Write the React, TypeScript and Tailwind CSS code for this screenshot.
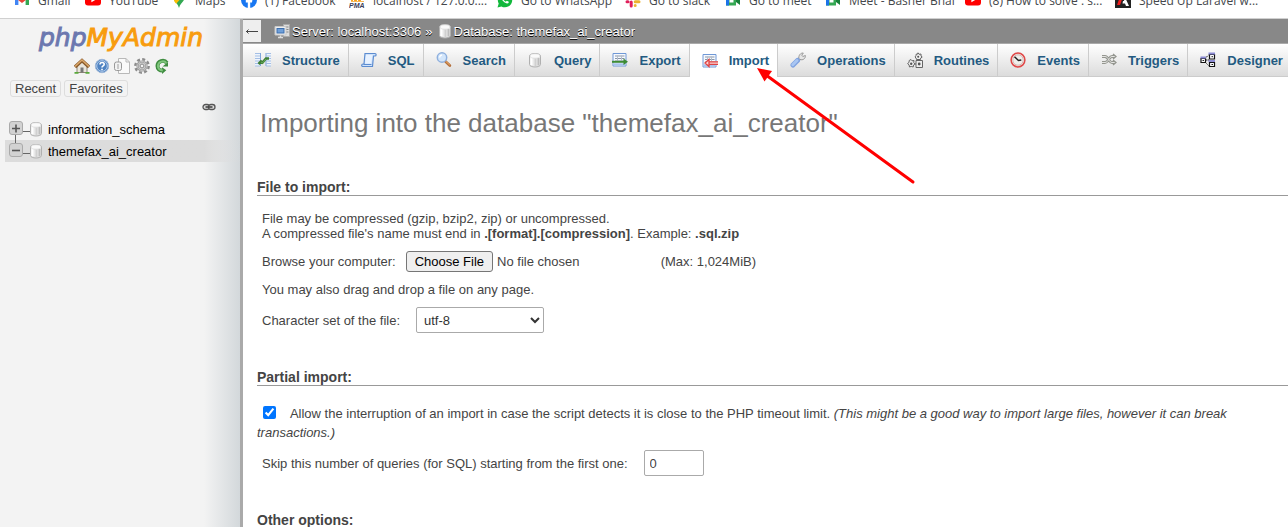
import type { ReactNode } from "react";

function Icon({ children, className = "size-4" }: { children: ReactNode; className?: string }) {
  return (
    <svg viewBox="0 0 16 16" fill="none" aria-hidden="true" className={`shrink-0 ${className}`}>
      {children}
    </svg>
  );
}

/* ---------- bookmark icons ---------- */

const YouTubeMark = () => (
  <Icon>
    <rect x="0" y="2" width="16" height="11.5" rx="3" fill="#f00" />
    <path d="M6.4 5.2v5l4.3-2.5z" fill="#fff" />
  </Icon>
);

const GmailMark = () => (
  <Icon>
    <path d="M1 13V4.5l3.4 2.6V13z" fill="#4285f4" />
    <path d="M11.6 13V7.1L15 4.5V13z" fill="#34a853" />
    <path d="M1 4.2 2.6 3 8 7.4 13.4 3 15 4.2v1.4L8 11 1 5.6z" fill="#ea4335" />
  </Icon>
);

const MapsMark = () => (
  <Icon>
    <path d="M8 0a5.6 5.6 0 0 0-5.6 5.6C2.4 9.500 7 11 8 16c1-5 5.600-6.500 5.600-10.400A5.600 5.600 0 0 0 8 0z" fill="#34a853" />
    <path d="M3 8.400 8.500 4l1.900 1.800-5.200 6C4.300 10.600 3.500 9.800 3 8.400z" fill="#fbbc04" />
    <path d="M8 0a5.600 5.600 0 0 1 5 3l-3 3-4-4.500z" fill="#4285f4" />
    <circle cx="8" cy="5.600" r="2" fill="#fff" />
  </Icon>
);

const FacebookMark = () => (
  <Icon>
    <circle cx="8" cy="8" r="8" fill="#1877f2" />
    <path d="M6.800 16v-5.600H4.800V8h2V6.300c0-2 1.200-3.100 3-3.100l1.700.1v2h-1c-1 0-1.300.6-1.300 1.200V8h2.200l-.4 2.400H9.200V16z" fill="#fff" />
  </Icon>
);

const PmaMark = () => (
  <Icon>
    <path d="M3 9V5h3v4M7 9V4h3v5M11 9V5h4" stroke="#f89c0e" strokeWidth="1.800" />
    <path d="M2 9.500h13" stroke="#f5b95b" />
    <text x="0" y="15.500" fontSize="7" fontWeight="bold" fontStyle="italic" fontFamily="Liberation Sans, sans-serif" fill="#3c3d58">
      PMA
    </text>
  </Icon>
);

const WhatsAppMark = () => (
  <Icon>
    <path d="M.5 15.500 1.700 11.600A7.200 7.200 0 1 1 4.500 14.400z" fill="#12b83c" />
    <path d="M5 4.300c-1 1-.6 3 1.300 5s4 2.700 5.200 1.700l.3-1.200-2-1-1 1c-1-.4-2-1.400-2.500-2.400l.8-1-.8-2z" fill="#fff" />
  </Icon>
);

const SlackMark = () => (
  <Icon>
    <g strokeWidth="3" strokeLinecap="round">
      <path d="M6 2.500v4M2 6.500h0" stroke="#36c5f0" />
      <path d="M10 2.500v4M14 6.500h0" stroke="#2eb67d" />
      <path d="M2 9.800h1M6.200 10v4" stroke="#e01e5a" />
      <path d="M10.200 9.800H14M10.200 13.500h0" stroke="#ecb22e" />
    </g>
  </Icon>
);

const MeetMark = () => (
  <Icon>
    <path d="M1 3h10v10.500H1z" fill="#34a853" />
    <path d="M1 3h3v10.500H1z" fill="#1a73e8" />
    <path d="M11 7 15 3.500v9.500l-4-3z" fill="#188038" />
    <path d="M4.500 6h4v4.500h-4z" fill="#fff" />
  </Icon>
);

const LaravelMark = () => (
  <Icon>
    <path d="M0 0h16v16H0z" fill="#222" />
    <path d="M6 2h3L5 13H2z" fill="#f01c1c" />
    <path d="M9 3l5 11h-3l-1-2.500H7.500L8 9h1.300L8 6z" fill="#fff" />
  </Icon>
);

/* ---------- phpMyAdmin icons ---------- */

const HomeIcon = () => (
  <Icon>
    <path d="M3 8v6.500h10V8L8 3.500z" fill="#e9e5dc" stroke="#8d8577" />
    <path d="M6.500 14.500V9.500h3v5z" fill="#777" />
    <path d="M1 9 8 2.500 15 9" stroke="#8a5a2b" strokeWidth="3.400" />
    <path d="M1 8.500 8 2l7 6.500" stroke="#dca96b" strokeWidth="1.500" />
    <path d="M.5 14.800h4M11.500 14.800h4" stroke="#58a83a" strokeWidth="1.800" />
  </Icon>
);

const HelpIcon = () => (
  <Icon>
    <circle cx="8" cy="8" r="6.700" fill="#4f83c2" stroke="#9db7d8" />
    <circle cx="8" cy="8" r="5.300" stroke="#b4cdeb" />
    <path d="M6 6.500c0-2.800 4.200-2.500 4.200-.2C10.200 8 8 7.700 8 9.500M8 10.800v1.500" stroke="#fff" strokeWidth="1.600" />
  </Icon>
);

const DocsIcon = () => (
  <Icon>
    <path d="M4.500.5H12L15.500 4v11.500h-11z" fill="#fafafa" stroke="#b9b9b9" />
    <path d="M12 .5V4h3.500" stroke="#b9b9b9" />
    <rect x=".5" y="4" width="7" height="8.500" rx="2" fill="#f2f2f2" stroke="#999" />
    <path d="M4 6v5" stroke="#bbb" strokeWidth="1.500" />
  </Icon>
);

const GearIcon = () => (
  <Icon>
    <circle cx="8" cy="8" r="6.700" stroke="#8c8c8c" strokeWidth="2.400" strokeDasharray="3 2.262" />
    <circle cx="8" cy="8" r="4.500" fill="#ccc" stroke="#999" strokeWidth="2.200" />
    <circle cx="8" cy="8" r="4.500" stroke="#c4c4c4" />
    <circle cx="8" cy="8" r="1.900" fill="#f3f3f3" stroke="#8c8c8c" />
  </Icon>
);

const ReloadIcon = () => (
  <Icon>
    <path d="M12.800 5C10 1 3.500 3 3.500 8c0 3 2.300 4.600 5 4.600" stroke="#3f8c40" strokeWidth="4" />
    <path d="M8 9.200v6.800l4.300-3.800zM8.500 8.500h5.500V4z" fill="#3f8c40" />
    <path d="M12.300 5C9.800 2 4 3.300 4 8c0 2.600 2 4.200 4.800 4.400" stroke="#7fc67c" strokeWidth="2" />
  </Icon>
);

const DatabaseIcon = () => (
  <Icon>
    <path d="M2.500 4c0-3.300 11-3.300 11 0v8.500c0 3.300-11 3.300-11 0z" fill="#e9e9e9" stroke="#b0b0b0" />
    <path d="M4.500 5.500v7.500" stroke="#fff" strokeWidth="2" />
    <path d="M8.500 6.500v7.500" stroke="#d0d0d0" strokeWidth="2" />
    <path d="M11.500 6v7.500" stroke="#bdbdbd" strokeWidth="2" />
    <ellipse cx="8" cy="4" rx="5" ry="2.200" fill="#fafafa" stroke="#d4d4d4" strokeWidth=".6" />
  </Icon>
);

const ServerIcon = () => (
  <Icon>
    <path d="M9.500 1.500h6v12h-6z" fill="#ddd" stroke="#aaa" />
    <path d="M11 4h3.500M11 6.500h3.500M11 9h3.500" stroke="#888" />
    <path d="M1 3.500h11v8.500H1z" fill="#eee" stroke="#c8c8c8" />
    <path d="M2.500 5h8v5.500h-8z" fill="#3d6fae" />
    <path d="M3.500 6h6v3.500h-6z" fill="#6f9fd8" />
    <path d="M6.500 12.500v2M4 14.500h5" stroke="#ddd" strokeWidth="1.500" />
  </Icon>
);

const LinkIcon = () => (
  <svg viewBox="0 0 14 8" fill="none" aria-hidden="true" className="h-2 w-3.5">
    <rect x="1" y="1.500" width="6.500" height="5" rx="2.500" fill="#ddd" stroke="#555" strokeWidth="1.300" />
    <rect x="6.500" y="1.500" width="6.500" height="5" rx="2.500" fill="#ddd" stroke="#555" strokeWidth="1.300" />
    <path d="M3.500 4h7" stroke="#444" strokeWidth="1.600" />
  </svg>
);

const StructureIcon = () => (
  <Icon>
    <path d="M0 1h5.500v13H0zM11 1h5v13h-5z" fill="#eef4fc" />
    <path d="M5.500 1v13M11 1v13" stroke="#7fa5da" />
    <path d="M0 1.500h5M0 4h5M0 6.500h5M0 9h5M0 11.500h5M0 14h5M11 1.500h5M11 4h5M11 6.500h5M11 9h5M11 11.500h5M11 14h5" stroke="#a3bee4" />
    <path d="M3.500 12 6 9.500l1.500 1L11 6.500h3" stroke="#3f7f37" strokeWidth="2.600" />
    <path d="M6 10l1.500 1L11 7" stroke="#69ad5c" />
  </Icon>
);

const SqlIcon = () => (
  <Icon>
    <path d="M4 1.500h10c1.500 0 1.500 2.500 0 2.500h-1.500L11.500 14.500H2c-2 0-1.500-2.500 0-2.500h1z" fill="#cfe2fa" stroke="#5c8cd0" strokeWidth="1.200" />
    <path d="M5 3h6.500L10 11.500H4z" fill="#e8f2ff" />
    <path d="M2.500 12.500h8" stroke="#5c8cd0" />
  </Icon>
);

const SearchIcon = () => (
  <Icon>
    <path d="m9.500 9.500 4.300 4" stroke="#b4703c" strokeWidth="2.800" strokeLinecap="round" />
    <path d="m10 9.500 3.500 3.300" stroke="#f0b070" strokeLinecap="round" />
    <circle cx="6" cy="5.500" r="4.700" fill="#d3e6fb" stroke="#8fb0de" strokeWidth="1.500" />
    <path d="M3.500 5.500C3.800 4 4.700 3.200 6 3" stroke="#fff" strokeWidth="1.300" />
  </Icon>
);

const Sheet = () => (
  <>
    <path d="M1 1.500h13V14H1z" fill="#f6f9fe" stroke="#6f98d6" />
    <path d="M3 4h9.500M3 6.500h9.500M3 9h9.500" stroke="#8a97a8" />
    <path d="M5.500 3.500v6M9.500 3.500v6" stroke="#b5bfcc" />
    <path d="M1.500 12.300h12" stroke="#a9c4ee" strokeWidth="2" />
  </>
);

const ExportIcon = () => (
  <Icon>
    <Sheet />
    <path d="M0 9.800h12" stroke="#3d8b34" strokeWidth="2" />
    <path d="M11.500 6.500 16 9.800l-4.500 3.300z" fill="#3d8b34" />
  </Icon>
);

const ImportIcon = () => (
  <Icon>
    <Sheet />
    <path d="M3 10 7.500 6v2.500H16v3H7.500V14z" fill="#fbd5d5" />
    <path d="M3 10 7 6.500v7zM7 8.800h9M7 11.300h9" stroke="#e04343" strokeWidth="1.300" />
  </Icon>
);

const WrenchIcon = () => (
  <Icon>
    <path d="M7 9 10.500 5.500" stroke="#999" strokeWidth="3" />
    <path d="M9 6.500C8.300 3.500 10.500.8 13.300 1L11.800 3.200l1 1.300 2.600-1C15.700 6.500 13 8.500 10 7.500z" fill="#e6e6e6" stroke="#999" />
    <path d="m3 13 4.500-4.500" stroke="#7fa2e0" strokeWidth="5" strokeLinecap="round" />
    <path d="m2.800 12.700 4.200-4.200" stroke="#a9c6f2" strokeWidth="3" strokeLinecap="round" />
  </Icon>
);

const RoutinesIcon = () => (
  <Icon>
    <g stroke="#666" fill="#eee">
      <path d="m11 .8 1 1.500 2-.3v2l1.200 1-1.500 1-.2 1.500h-4l-.5-1.500-1-1 1-1.500.3-1.500 1 .3z" />
      <path d="m4 7.500 1 1.300 2-.3-.3 2L8 12l-1.500 1-.3 2-2-.6-1.700.6-.4-2L.6 11.500 2 10.500l.2-2z" />
      <path d="M9 8.500h6.500v7H9zM12 7.500v1M8 12h1M12 15v.8" />
    </g>
    <g fill="#555">
      <circle cx="11.200" cy="4.700" r="1" />
      <circle cx="4.200" cy="11.700" r="1.200" />
      <circle cx="12.200" cy="12" r="1.400" />
    </g>
  </Icon>
);

const EventsIcon = () => (
  <Icon>
    <circle cx="8" cy="8" r="6.900" fill="#efefec" stroke="#e04848" strokeWidth="1.500" />
    <circle cx="8" cy="8" r="5.200" stroke="#d7b9b5" />
    <path d="m4.500 4.800 4 3.700 2.800-.5" stroke="#222" strokeWidth="1.500" />
  </Icon>
);

const TriggersIcon = () => (
  <Icon>
    <path d="M1 4.500h3c3.500 0 4 6 7 6h3M1 10.500h3c3.500 0 4-6 7-6h3" stroke="#94968f" strokeWidth="2.800" />
    <path d="M1 4.500h3c3.500 0 4 6 7 6h3M1 10.500h3c3.500 0 4-6 7-6h3" stroke="#e4e4e2" />
    <path d="m12 2 3 2.500L12 7M12 8l3 2.500-3 2.500" stroke="#94968f" strokeWidth="1.300" />
  </Icon>
);

const DesignerIcon = () => (
  <Icon>
    <path d="M5 6.500 8.500 3M5 10l3.500 3.500M6 8h3" stroke="#222" strokeDasharray="1.500 .5" />
    <path d="M1 6.500h4.500v4H1zM9.500 2.500h5v4.500h-5zM9.500 10.500h5v4h-5z" fill="#fff" stroke="#111" strokeWidth="1.200" />
    <path d="M.5 5.500h5.500M8.500 1.500h6.500M8.500 9h6.500" stroke="#8c8cd4" strokeWidth="2" />
    <path d="M2.500 8.500h1.500M11.500 4.700h1.500M11.500 12.500h1.500" stroke="#222" />
  </Icon>
);

/* ---------- page parts ---------- */

const bookmarks = [
  { label: "Gmail", icon: <GmailMark />, width: "w-[71px]" },
  { label: "YouTube", icon: <YouTubeMark />, width: "w-[86px]" },
  { label: "Maps", icon: <MapsMark />, width: "w-[70px]" },
  { label: "(1) Facebook", icon: <FacebookMark />, width: "w-[108px]" },
  { label: "localhost / 127.0.0....", icon: <PmaMark />, width: "w-[148px]" },
  { label: "Go to WhatsApp", icon: <WhatsAppMark />, width: "w-[128px]" },
  { label: "Go to slack", icon: <SlackMark />, width: "w-[100px]" },
  { label: "Go to meet", icon: <MeetMark />, width: "w-[100px]" },
  { label: "Meet - Basher Bhai", icon: <MeetMark />, width: "w-[140px]" },
  { label: "(8) How to solve : s...", icon: <YouTubeMark />, width: "w-[150px]" },
  { label: "Speed Up Laravel w...", icon: <LaravelMark />, width: "w-[150px]" },
];

function BookmarkBar() {
  return (
    <nav
      aria-label="Bookmarks"
      className="flex h-[19px] shrink-0 items-end overflow-hidden border-b border-[#d0d0d0] bg-white pb-2.5 pl-3.5 font-['Open_Sans','Noto_Sans',sans-serif] text-[12px] leading-[18px] text-[#44474b]"
    >
      {bookmarks.map((b) => (
        <a key={b.label} href="#" className={`flex h-4 shrink-0 gap-2 whitespace-nowrap ${b.width}`}>
          {b.icon}
          {b.label}
        </a>
      ))}
    </nav>
  );
}

function TreeRow({ name, open }: { name: string; open?: boolean }) {
  return (
    <li
      className={`flex h-[22px] items-center pl-1 text-black ${open ? "bg-linear-to-r from-[#dcdcdc] from-85% to-transparent" : ""}`}
    >
      <svg viewBox="0 0 21 22" fill="none" aria-hidden="true" className="-mr-0.5 h-[22px] w-[21px] shrink-0">
        <path d={open ? "M6.500 0v4" : "M6.500 17v5"} stroke="#666" />
        <path d="M13 13.500h8" stroke="#666" />
        <rect x=".5" y="3.500" width="13" height="13" rx="2.500" fill="#d2d2d2" stroke="#aaa" />
        <path d={open ? "M3 10.500h8" : "M3 10.500h8M7 6.500v8"} stroke="#555" strokeWidth="1.600" />
      </svg>
      <DatabaseIcon />
      <a href="#" className="ml-1">
        {name}
      </a>
    </li>
  );
}

function Sidebar() {
  return (
    <aside className="w-[243px] shrink-0 border-r-3 border-[#aaa] bg-[linear-gradient(to_left,#d3d8db,#f3f3f3_36px)]">
      <a href="#" className="mt-px block pl-0.5 text-center font-['DejaVu_Sans',sans-serif] text-[25px] leading-9 italic">
        <span className="text-[#6c78af] [-webkit-text-stroke:1px_#6c78af]">php</span>
        <span className="text-[#f89c0e] [-webkit-text-stroke:1px_#f89c0e]">MyAdmin</span>
      </a>
      <div className="mt-0.5 flex justify-center gap-1 pl-[3px]">
        <a href="#" aria-label="Home"><HomeIcon /></a>
        <a href="#" aria-label="Documentation"><HelpIcon /></a>
        <a href="#" aria-label="MySQL documentation"><DocsIcon /></a>
        <a href="#" aria-label="Settings"><GearIcon /></a>
        <a href="#" aria-label="Reload"><ReloadIcon /></a>
      </div>
      <div className="mt-1.5 flex gap-[3px] pl-2.5">
        <button type="button" className="rounded-[3px] border border-[#ddd] px-1 leading-[15px]">Recent</button>
        <button type="button" className="rounded-[3px] border border-[#ddd] px-1 leading-[15px]">Favorites</button>
      </div>
      <div className="mt-1.5 flex justify-end pr-6">
        <button type="button" aria-label="Unlink from main panel"><LinkIcon /></button>
      </div>
      <ul className="mt-[7px] pl-[5px]">
        <TreeRow name="information_schema" />
        <TreeRow name="themefax_ai_creator" open />
      </ul>
    </aside>
  );
}

const tabs = [
  { label: "Structure", icon: <StructureIcon /> },
  { label: "SQL", icon: <SqlIcon /> },
  { label: "Search", icon: <SearchIcon /> },
  { label: "Query", icon: <DatabaseIcon /> },
  { label: "Export", icon: <ExportIcon /> },
  { label: "Import", icon: <ImportIcon />, active: true },
  { label: "Operations", icon: <WrenchIcon /> },
  { label: "Routines", icon: <RoutinesIcon /> },
  { label: "Events", icon: <EventsIcon /> },
  { label: "Triggers", icon: <TriggersIcon /> },
  { label: "Designer", icon: <DesignerIcon /> },
];

function TopBar() {
  return (
    <header className="shrink-0">
      <div className="flex h-6 items-center bg-[#888] text-white [text-shadow:0_1px_0_#000]">
        <button type="button" aria-label="Hide panel" className="flex h-[22px] w-[18px] items-center justify-center bg-[#eee]">
          <svg viewBox="0 0 14 8" fill="none" aria-hidden="true" className="h-2 w-3.5">
            <path d="M1 4.500h12M3.500 2.500 1.500 4.500l2 2" stroke="#444" />
          </svg>
        </button>
        <a href="#" className="ml-[13px] flex items-center gap-0.5"><ServerIcon />Server: localhost:3306</a>
        <span className="mx-1">»</span>
        <a href="#" className="flex items-center gap-px"><DatabaseIcon />Database: themefax_ai_creator</a>
      </div>
      <nav aria-label="Database" className="flex h-[34px] overflow-hidden border-t border-[#aaa] font-bold text-[#235a81]">
        {tabs.map((t) => (
          <a
            key={t.label}
            href="#"
            className={`flex shrink-0 items-center gap-[11px] border-r border-r-[#ccc] pr-2 pl-3 ${
              t.active ? "bg-white" : "border-b border-b-[#ccc] bg-linear-to-b from-white to-[#dcdcdc]"
            }`}
          >
            {t.icon}
            {t.label}
          </a>
        ))}
      </nav>
    </header>
  );
}

function SectionTitle({ children }: { children: ReactNode }) {
  return <h3 className="border-b border-[#999] text-[14px] leading-4 font-bold">{children}</h3>;
}

function ImportForm() {
  return (
    <form className="pl-3.5">
      <h2 className="mt-[31px] pl-[3px] text-[26px] leading-[30px] text-[#777]">
        Importing into the database "themefax_ai_creator"
      </h2>

      <section className="mt-[41px]">
        <SectionTitle>File to import:</SectionTitle>
        <div className="mt-[15px] pl-[5px]">
          <p>File may be compressed (gzip, bzip2, zip) or uncompressed.</p>
          <p>
            A compressed file's name must end in <b>.[format].[compression]</b>. Example: <b>.sql.zip</b>
          </p>
          <div className="mt-2.5 flex items-center">
            <label htmlFor="import-file">Browse your computer:</label>
            <input
              id="import-file"
              type="file"
              className="ml-2.5 w-[255px] file:mr-1 file:h-[21px] file:rounded-[3px] file:border file:border-[#767676] file:bg-[#efefef] file:px-2 file:text-black"
            />
            <span>(Max: 1,024MiB)</span>
          </div>
          <p className="mt-2.5">You may also drag and drop a file on any page.</p>
          <div className="mt-2.5 flex items-center">
            <label htmlFor="charset">Character set of the file:</label>
            <select id="charset" className="ml-4 h-[26px] w-32 rounded-[2px] border border-[#aaa] bg-white px-[3px] text-[#333]">
              <option>utf-8</option>
            </select>
          </div>
        </div>
      </section>

      <section className="mt-9">
        <SectionTitle>Partial import:</SectionTitle>
        <div className="mt-[18px] leading-[19px]">
          <input id="allow-interrupt" type="checkbox" defaultChecked className="mr-[11px] ml-1.5 size-[13px] align-[-1px] accent-[#0075ff]" />{" "}
          <label htmlFor="allow-interrupt">
            Allow the interruption of an import in case the script detects it is close to the PHP timeout limit.{" "}
            <i>(This might be a good way to import large files, however it can break transactions.)</i>
          </label>
        </div>
        <div className="mt-2 flex items-center pl-[5px]">
          <label htmlFor="skip">Skip this number of queries (for SQL) starting from the first one:</label>
          <input id="skip" type="text" defaultValue="0" className="ml-4 h-[26px] w-[60px] rounded-[2px] border border-[#aaa] px-[5px]" />
        </div>
      </section>

      <section className="mt-9">
        <SectionTitle>Other options:</SectionTitle>
      </section>
    </form>
  );
}

export default function App() {
  return (
    <div className="relative flex h-screen flex-col overflow-hidden bg-white font-['Liberation_Sans',Arial,sans-serif] text-[13px] leading-[15px] text-[#444]">
      <BookmarkBar />
      <div className="flex min-h-0 flex-1">
        <Sidebar />
        <main className="min-w-0 flex-1">
          <TopBar />
          <ImportForm />
        </main>
      </div>
      <svg viewBox="0 0 160 120" fill="none" aria-hidden="true" className="pointer-events-none absolute top-[66px] left-[756px] h-[120px] w-40">
        <path d="M10 9 157 116" stroke="#f00" strokeWidth="3" strokeLinecap="round" />
        <path d="M1 2 16 5 8.500 15.500z" fill="#f00" />
      </svg>
    </div>
  );
}
